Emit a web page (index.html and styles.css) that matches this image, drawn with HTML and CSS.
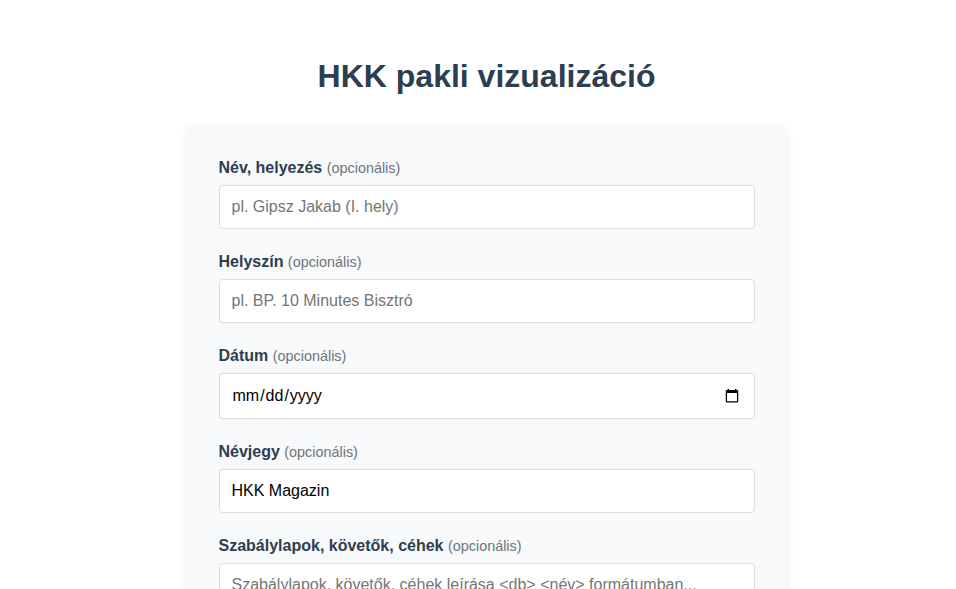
FILE: index.html
```html
<!DOCTYPE html>
<html lang="hu">
<head>
<meta charset="utf-8">
<title>HKK pakli vizualizáció</title>
<link rel="stylesheet" href="styles.css">
</head>
<body>
<div class="container">
  <h1>HKK pakli vizualizáció</h1>
  <form class="card">
    <div class="group">
      <label for="a">Név, helyezés <span class="opt">(opcionális)</span></label>
      <input id="a" type="text" placeholder="pl. Gipsz Jakab (I. hely)">
    </div>
    <div class="group">
      <label for="b">Helyszín <span class="opt">(opcionális)</span></label>
      <input id="b" type="text" placeholder="pl. BP. 10 Minutes Bisztró">
    </div>
    <div class="group">
      <label for="c">Dátum <span class="opt">(opcionális)</span></label>
      <input id="c" type="date">
    </div>
    <div class="group">
      <label for="d">Névjegy <span class="opt">(opcionális)</span></label>
      <input id="d" type="text" value="HKK Magazin">
    </div>
    <div class="group">
      <label for="e">Szabálylapok, követők, céhek <span class="opt">(opcionális)</span></label>
      <textarea id="e" rows="4" placeholder="Szabálylapok, követők, céhek leírása &lt;db&gt; &lt;név&gt; formátumban..."></textarea>
    </div>
  </form>
</div>
</body>
</html>
```
FILE: styles.css
```css
* { box-sizing: border-box; }
html, body { margin: 0; padding: 0; background: #fff; overflow: hidden; height: 589px; }
body { font-family: "Liberation Sans", Arial, sans-serif; color: #2c3e50; }
.container { width: 600px; margin: 0 0 0 186.5px; padding-top: 56px; }
h1 { margin: 0 0 30px; font-size: 32px; line-height: 40px; font-weight: 700; text-align: center; color: #2c3e50; }
.card { background: #f8f9fa; border-radius: 8px; padding: 33px 32px 32px; box-shadow: 0 2px 8px rgba(0,0,0,0.08); }
.group { margin-bottom: 24px; }
label { display: block; font-size: 16px; line-height: 18px; font-weight: 700; margin-bottom: 8px; color: #2c3e50; }
.opt { font-size: 14.4px; font-weight: 400; color: #6c757d; }
input, textarea { display: block; width: 100%; padding: 12px; border: 1px solid #ddd; border-radius: 4px; font-family: "Liberation Sans", Arial, sans-serif; font-size: 16px; background: #fff; color: #000; }
input::placeholder, textarea::placeholder { color: #757575; }
```
